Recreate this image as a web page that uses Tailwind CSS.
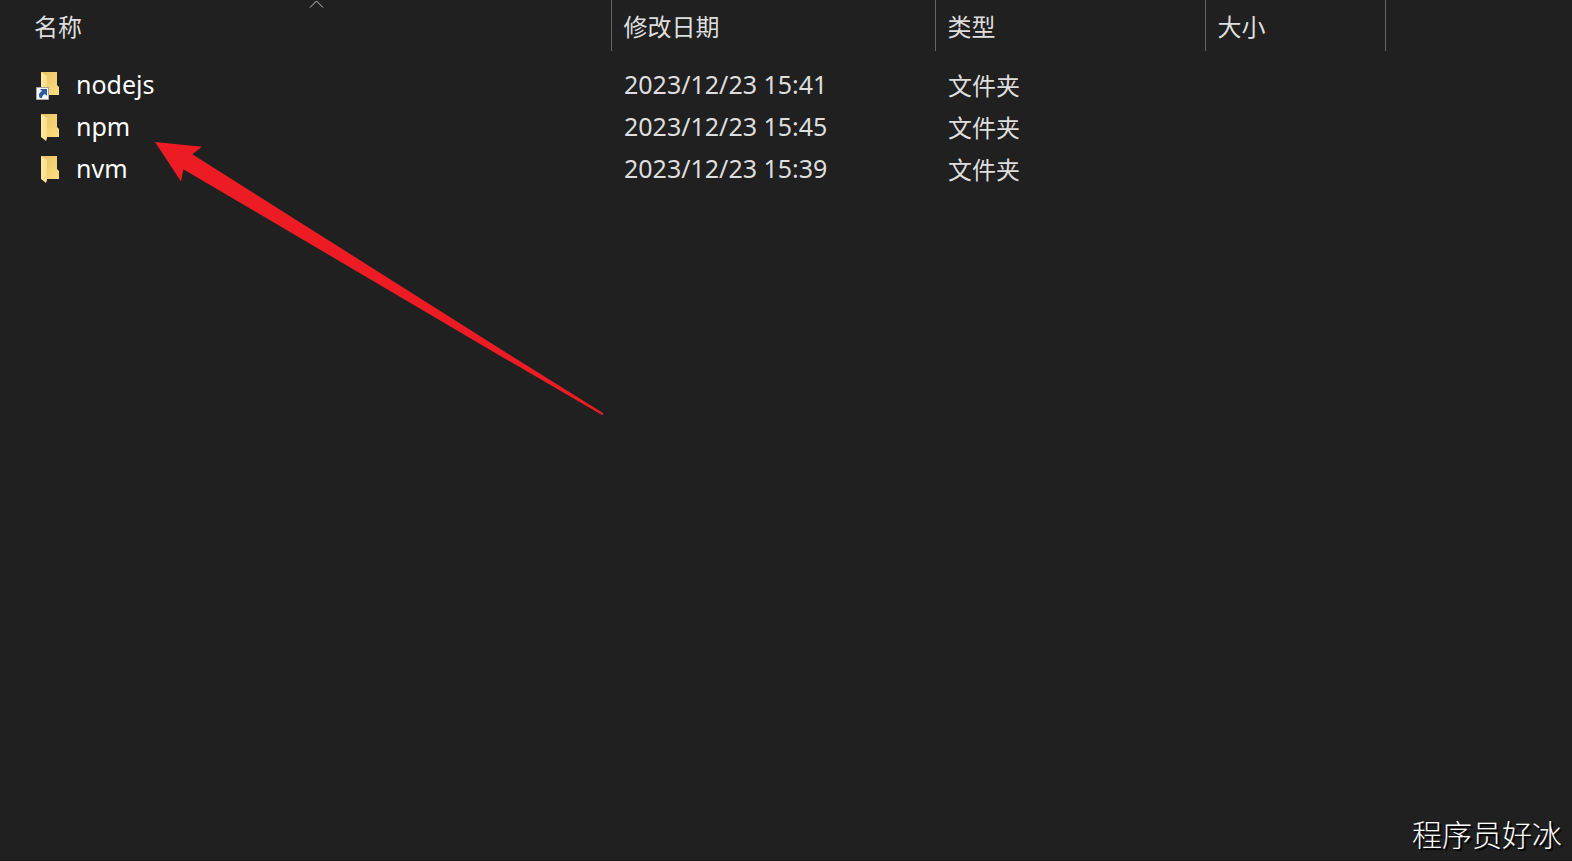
<!DOCTYPE html>
<html lang="zh-CN">

<head>
    <meta charset="UTF-8" />
    <meta
        name="viewport"
        content="width=device-width, initial-scale=1.0"
    />
    <script src="https://cdn.jsdelivr.net/npm/@tailwindcss/browser@4"></script>
    <title>文件夹</title>
</head>

<body class="relative min-h-screen overflow-x-hidden bg-[#202020] border-b border-[#191919] text-[#dedede] font-['Noto_Sans','Noto_Sans_CJK_SC',sans-serif]">

    <!-- folder shapes shared by the rows -->
    <svg class="absolute size-0">
        <defs>
            <linearGradient id="folder-back" x1="0" x2="1" y1="0" y2="1">
                <stop offset="0" stop-color="#e8c15f" />
                <stop offset="1" stop-color="#ffdf85" />
            </linearGradient>
            <linearGradient id="folder-flap" x1="0" x2="1" y1="0" y2="0">
                <stop offset="0" stop-color="#ffe9a8" />
                <stop offset="1" stop-color="#ffdd85" />
            </linearGradient>
            <symbol id="folder" viewBox="0 0 32 32">
                <path fill="url(#folder-back)" d="M9 2h16v13l2 2v8H9z" />
                <path fill="url(#folder-flap)" d="M9 2l6 4v20l-1 3-5-4z" />
            </symbol>
        </defs>
    </svg>

    <main>
        <table class="w-full table-fixed text-left text-[24px] leading-[42px]">
            <colgroup>
                <col class="w-[611px]" />
                <col class="w-[324px]" />
                <col class="w-[270px]" />
                <col class="w-[180px]" />
                <col />
            </colgroup>
            <thead>
                <tr class="h-[51px]">
                    <th class="relative border-r border-[#636363] p-0 pl-[34px] font-normal" aria-sort="ascending">
                        <svg
                            class="absolute top-0 left-1/2 ml-1 h-2 w-4"
                            viewBox="0 0 16 8"
                            fill="none"
                            stroke="#c8c8c8"
                        >
                            <path d="M1 7.500L7.500 1 14 7.500" />
                        </svg>
                        <button class="align-middle">名称</button>
                    </th>
                    <th class="border-r border-[#636363] p-0 pl-3 font-normal"><button class="align-middle">修改日期</button></th>
                    <th class="border-r border-[#636363] p-0 pl-3 font-normal"><button class="align-middle">类型</button></th>
                    <th class="border-r border-[#636363] p-0 pl-3 font-normal"><button class="align-middle">大小</button></th>
                    <td></td>
                </tr>
            </thead>
            <tbody>
                <tr class="h-[14px]"><td colspan="5"></td></tr>
                <tr class="h-[42px]">
                    <td class="p-0 pl-8">
                        <a href="#nodejs" class="flex items-center gap-3 text-[25px] leading-[38px] text-white">
                            <svg class="size-8" viewBox="0 0 32 32">
                                <use href="#folder" />
                                <path fill="#f6f6f6" stroke="#a8a8a8" d="M4.500 17.500h12v12h-12z" />
                                <path fill="#2b5c9e" d="M8 19h7v7l-2-2c-2 1-3 2-3 4H8c-2-3-1-5 2-7z" />
                            </svg>
                            <span class="pb-1">nodejs</span>
                        </a>
                    </td>
                    <td class="p-0 pb-1 pl-[13px] text-[25px] leading-[38px]">2023/12/23 15:41</td>
                    <td class="p-0 pl-[13px]">文件夹</td>
                </tr>
                <tr class="h-[42px]">
                    <td class="p-0 pl-8">
                        <a href="#npm" class="flex items-center gap-3 text-[25px] leading-[38px] text-white">
                            <svg class="size-8"><use href="#folder" /></svg>
                            <span class="pb-1">npm</span>
                        </a>
                    </td>
                    <td class="p-0 pb-1 pl-[13px] text-[25px] leading-[38px]">2023/12/23 15:45</td>
                    <td class="p-0 pl-[13px]">文件夹</td>
                </tr>
                <tr class="h-[42px]">
                    <td class="p-0 pl-8">
                        <a href="#nvm" class="flex items-center gap-3 text-[25px] leading-[38px] text-white">
                            <svg class="size-8"><use href="#folder" /></svg>
                            <span class="pb-1">nvm</span>
                        </a>
                    </td>
                    <td class="p-0 pb-1 pl-[13px] text-[25px] leading-[38px]">2023/12/23 15:39</td>
                    <td class="p-0 pl-[13px]">文件夹</td>
                </tr>
            </tbody>
        </table>
    </main>

    <!-- arrow pointing at npm -->
    <svg
        class="pointer-events-none absolute top-[140px] left-[152px] h-[280px] w-[456px]"
        viewBox="152 140 456 280"
        fill="#ed1c24"
    >
        <path d="M155 142L202 146.700 192.300 154.300 290 216 500 348.700 603 413Q604 415 602 415L500 355.700 290 232 183.300 169.300 181 181.500Z" />
    </svg>

    <p class="absolute right-[10px] bottom-[6px] text-[30px] leading-[42px] font-light text-white text-shadow-[2px_2px_1px_#000] font-['KaiTi','STKaiti','Noto_Sans_CJK_SC',serif]">程序员好冰</p>

</body>

</html>
